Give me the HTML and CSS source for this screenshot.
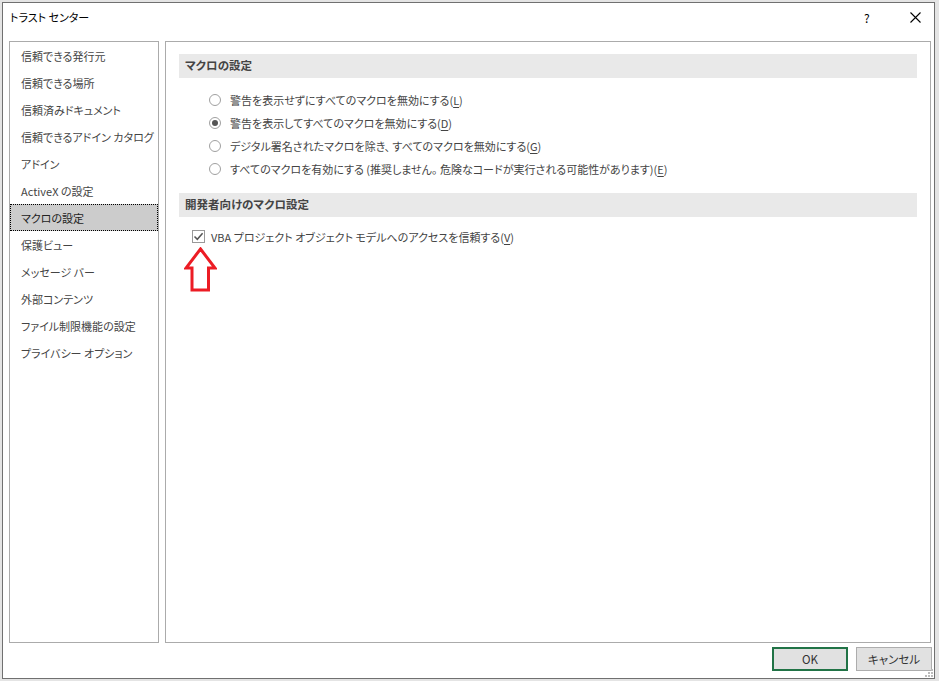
FILE: index.html
```html
<!DOCTYPE html>
<html lang="ja">
<head>
    <meta charset="UTF-8">
    <title>トラスト センター</title>
    <link rel="stylesheet" href="styles.css">
</head>
<body>

<div class="dialog">
    <div class="titlebar">
        <span class="title">トラスト センター</span>
        <span class="help">?</span>
        <svg class="close" width="11" height="11" viewBox="0 0 11 11">
            <path d="M0.5 0.5 L10.5 10.5 M10.5 0.5 L0.5 10.5" stroke="#000" stroke-width="1.1" fill="none"/>
        </svg>
    </div>

    <div class="main">
        <ul class="nav">
            <li>信頼できる発行元</li>
            <li>信頼できる場所</li>
            <li>信頼済みドキュメント</li>
            <li>信頼できるアドイン カタログ</li>
            <li>アドイン</li>
            <li>ActiveX の設定</li>
            <li class="active">マクロの設定</li>
            <li>保護ビュー</li>
            <li>メッセージ バー</li>
            <li>外部コンテンツ</li>
            <li>ファイル制限機能の設定</li>
            <li>プライバシー オプション</li>
        </ul>

        <div class="content">
            <div class="section-head">マクロの設定</div>
            <div class="options">
                <label class="option"><span class="radio"></span>警告を表示せずにすべてのマクロを無効にする(<u>L</u>)</label>
                <label class="option"><span class="radio checked"></span>警告を表示してすべてのマクロを無効にする(<u>D</u>)</label>
                <label class="option"><span class="radio"></span>デジタル署名されたマクロを除き、 すべてのマクロを無効にする(<u>G</u>)</label>
                <label class="option"><span class="radio"></span>すべてのマクロを有効にする (推奨しません。 危険なコードが実行される可能性があります)(<u>E</u>)</label>
            </div>

            <div class="section-head second">開発者向けのマクロ設定</div>
            <div class="dev">
                <label class="option check-row">
                    <span class="checkbox">
                        <svg width="11" height="11" viewBox="0 0 11 11">
                            <path d="M1.5 5.5 L4.3 8.3 L9.6 2.2" stroke="#555" stroke-width="1.5" fill="none"/>
                        </svg>
                    </span>VBA プロジェクト オブジェクト モデルへのアクセスを信頼する(<u>V</u>)
                </label>
                <svg class="arrow" width="33" height="45" viewBox="0 0 33 45">
                    <path d="M16.5 2 L31 21 L24.5 21 L24.5 43 L8 43 L8 21 L2 21 Z" stroke="#ec1c24" stroke-width="3" fill="none" stroke-linejoin="miter"/>
                </svg>
            </div>
        </div>
    </div>

    <div class="footer">
        <button class="btn primary">OK</button>
        <button class="btn">キャンセル</button>
        <svg class="grip" width="8" height="8" viewBox="0 0 8 8">
            <rect x="6" y="0" width="2" height="2" fill="#bbb"/>
            <rect x="3" y="3" width="2" height="2" fill="#bbb"/>
            <rect x="6" y="3" width="2" height="2" fill="#bbb"/>
            <rect x="0" y="6" width="2" height="2" fill="#bbb"/>
            <rect x="3" y="6" width="2" height="2" fill="#bbb"/>
            <rect x="6" y="6" width="2" height="2" fill="#bbb"/>
        </svg>
    </div>
</div>

</body>
</html>
```

FILE: styles.css
```css
/* Colors */
:root {
    --text: #444444;
    --panel-border: #ababab;
    --head-bg: #e9e9e9;
    --button-bg: #e1e1e1;
    --ok-border: #217346;
}

body {
    margin: 0;
    padding: 2px 0 0 2px;
    background: #e4e4e4;
    font-family: "Noto Sans CJK JP", "Noto Sans", sans-serif;
    font-size: 11px;
    font-feature-settings: "palt";
    color: var(--text);
}

.dialog {
    position: relative;
    width: 931px;
    height: 675px;
    background: #ffffff;
    border: 1px solid #707070;
    display: flex;
    flex-direction: column;
}

/* Title bar */
.titlebar {
    height: 30px;
    display: flex;
    align-items: center;
    padding: 0 0 0 7px;
    color: #000;
}

.title {
    flex: 1;
    margin-top: -2px;
}

.help {
    width: 12px;
    margin-right: 34px;
    margin-top: -2px;
    font-size: 12px;
}

.close {
    margin-right: 13px;
    margin-top: -2px;
}

/* Main area */
.main {
    display: flex;
    gap: 6px;
    margin-top: 8px;
    padding: 0 3px 0 6px;
    height: 602px;
}

.nav {
    list-style: none;
    margin: 0;
    padding: 0;
    width: 148px;
    border: 1px solid var(--panel-border);
}

.nav li {
    height: 27px;
    line-height: 26px;
    padding-left: 10px;
    box-sizing: border-box;
    border: 1px solid transparent;
    white-space: nowrap;
}

.nav li.active {
    background: #cccccc;
    border: 1px dotted #000;
    color: #222;
}

.content {
    flex: 1;
    border: 1px solid var(--panel-border);
    padding: 12px 13px 0 13px;
}

.section-head {
    height: 24px;
    line-height: 23px;
    padding-left: 6px;
    background: var(--head-bg);
    font-weight: bold;
    font-size: 11.5px;
    color: #444;
}

.section-head.second {
    margin-top: 13px;
}

.options {
    padding: 10px 0 0 30px;
}

.option {
    display: flex;
    align-items: center;
    height: 23px;
    white-space: pre;
}

.option u {
    text-underline-offset: 2px;
}

.radio {
    width: 12px;
    height: 12px;
    border: 1px solid #a0a0a0;
    border-radius: 50%;
    box-sizing: border-box;
    margin-right: 9px;
    display: flex;
    align-items: center;
    justify-content: center;
}

.radio.checked::after {
    content: "";
    width: 6px;
    height: 6px;
    border-radius: 50%;
    background: #555;
}

.dev {
    position: relative;
    padding: 8px 0 0 13px;
}

.check-row {
    white-space: nowrap;
}

.checkbox {
    width: 13px;
    height: 13px;
    border: 1px solid #999;
    box-sizing: border-box;
    margin-right: 6px;
    display: flex;
    align-items: center;
    justify-content: center;
}

.arrow {
    position: absolute;
    left: 5px;
    top: 30px;
}

/* Footer */
.footer {
    display: flex;
    justify-content: flex-end;
    gap: 8px;
    margin-top: 4px;
    padding-right: 2px;
}

.btn {
    width: 76px;
    height: 24px;
    background: var(--button-bg);
    border: 1px solid #adadad;
    font-family: inherit;
    font-size: 11.5px;
    font-feature-settings: "palt";
    color: #333;
    padding: 0;
}

.btn.primary {
    border: 2px solid var(--ok-border);
}

.grip {
    position: absolute;
    right: 1px;
    bottom: 1px;
}
```
